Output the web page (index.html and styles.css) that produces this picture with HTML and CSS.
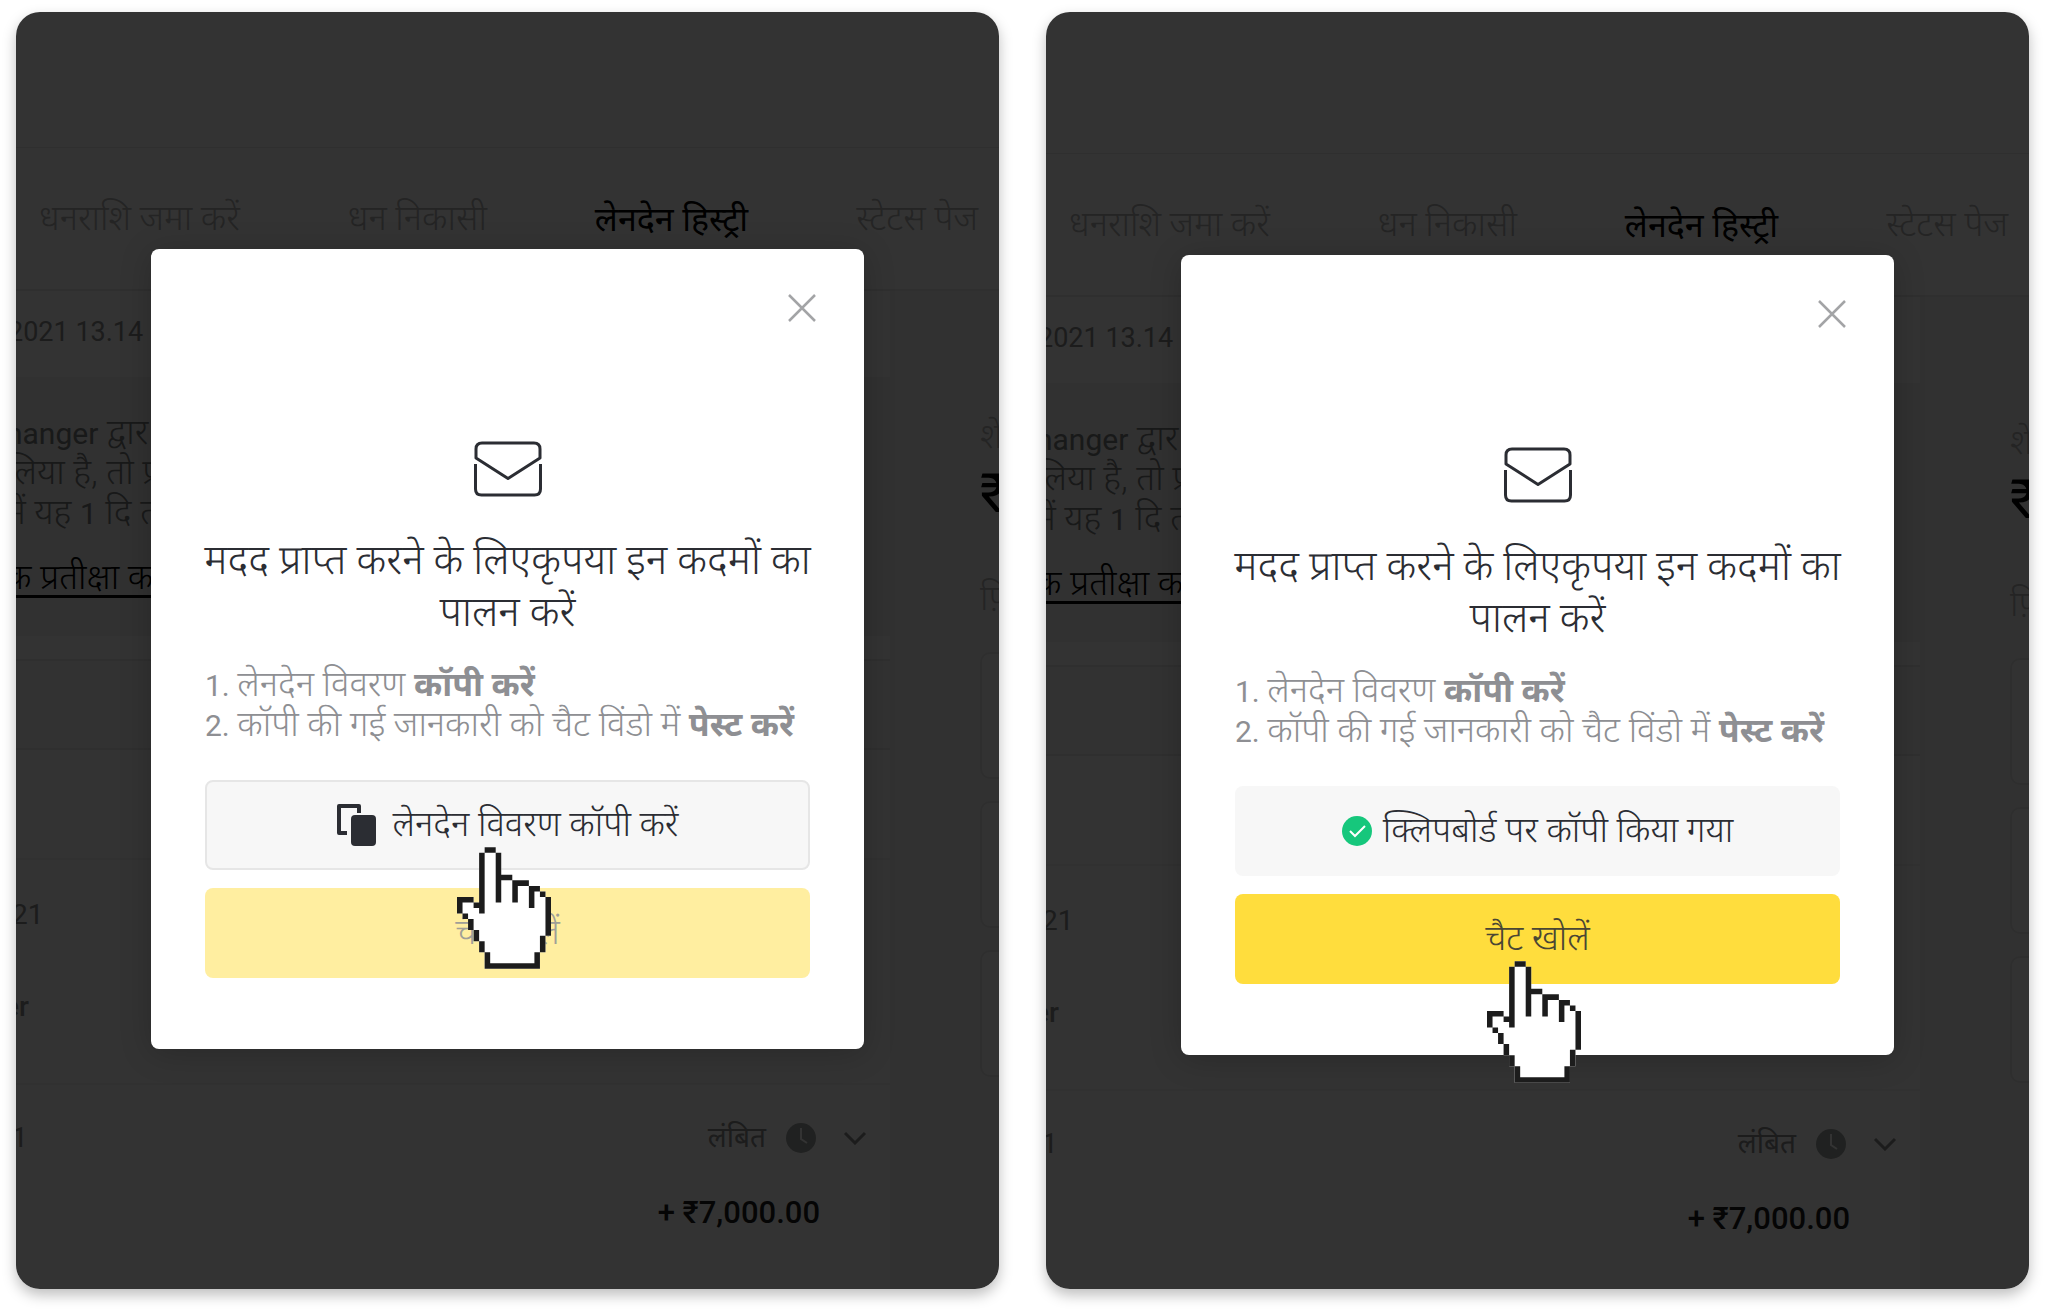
FILE: index.html
```
<!DOCTYPE html>
<html lang="hi">
<head>
  <meta charset="UTF-8">
  <title>लेनदेन हिस्ट्री</title>
  <meta name="viewport" content="width=device-width, initial-scale=1.0">
  <link rel="stylesheet" href="styles.css">
</head>
<body>
  <!-- Shared shapes -->
  <svg class="sprite" aria-hidden="true">
    <symbol id="hand" viewBox="0 0 17 22">
      <path fill="#fff" d="M5 0h2v1h1v4h2v1h3v1h2v1h1v1h1v7h-1v3h-1v3H5v-3H4v-2H3v-2H2v-2H1v-1H0V9h3v1h1V1h1z"/>
      <path fill="#1c1c1c" d="M5 0h2v1H5zM4 1h1v11H4zM7 1h1v9H7zM8 5h2v1H8zM10 6h3v1h-3zM10 7h1v3h-1zM13 7h2v1h-2zM13 8h1v3h-1zM15 8h1v1h-1zM16 9h1v7h-1zM15 16h1v3h-1zM14 19h1v3h-1zM5 21h9v1H5zM5 19h1v2H5zM4 17h1v2H4zM3 15h1v2H3zM2 13h1v2H2zM1 12h1v1H1zM0 9h1v3H0zM1 9h2v1H1zM3 10h1v1H3z"/>
    </symbol>
    <symbol id="envelope" viewBox="0 0 68 56">
      <g fill="none" stroke="#2b2d33" stroke-width="3">
        <path d="M2 17V8q0-6 6-6h52q6 0 6 6v9L34 37.500z" stroke-linejoin="round"/>
        <path d="M1.500 23v25q0 6 6 6h53q6 0 6-6V23"/>
      </g>
    </symbol>
    <symbol id="close" viewBox="0 0 28 28">
      <path d="M1 1l26 26M27 1L1 27" fill="none" stroke="#a3a4a6" stroke-width="2.500"/>
    </symbol>
    <symbol id="clock" viewBox="0 0 30 30">
      <circle cx="15" cy="15" r="15" fill="#a0a5a3"/>
      <path d="M15 5v11l6 4" fill="none" stroke="#fff" stroke-width="2"/>
    </symbol>
    <symbol id="chevron" viewBox="0 0 24 14">
      <path d="M2 2l10 10L22 2" fill="none" stroke="#8a8c8c" stroke-width="3"/>
    </symbol>
  </svg>

  <main class="steps">
    <section class="screen">
      <div class="page">
        <header class="topbar"></header>
        <nav class="tabs">
          <a href="#">धनराशि जमा करें</a>
          <a href="#">धन निकासी</a>
          <a href="#" class="active">लेनदेन हिस्ट्री</a>
          <a href="#">स्टेटस पेज</a>
        </nav>
        <div class="content">
          <div class="history">
            <div class="date">2021 13.14</div>
            <div class="notice">
              <p><span class="latin">hanger</span> द्वार<br>लिया है, तो प्र<br>में यह <span class="latin">1</span> दि त</p>
              <a href="#">क प्रतीक्षा क</a>
            </div>
            <div class="filter"></div>
            <div class="row blank"></div>
            <div class="row entry">
              <span>21</span>
              <b>er</b>
            </div>
            <div class="row last">
              <span>1</span>
              <div class="status">
                <span>लंबित</span>
                <svg class="clock"><use href="#clock"/></svg>
                <svg class="chevron"><use href="#chevron"/></svg>
              </div>
              <strong class="amount">+ ₹7,000.00</strong>
            </div>
          </div>
          <aside class="balance">
            <span>शे</span>
            <strong>₹</strong>
            <span>फ़ि</span>
            <div class="tiles">
              <div class="tile"></div>
              <div class="tile"></div>
              <div class="tile"></div>
            </div>
          </aside>
        </div>
      </div>
      <div class="overlay">
        <div class="modal" role="dialog" aria-labelledby="title-copy">
          <button class="close" type="button" aria-label="बंद करें"><svg><use href="#close"/></svg></button>
          <svg class="envelope"><use href="#envelope"/></svg>
          <h2 id="title-copy">मदद प्राप्त करने के लिएकृपया इन कदमों का पालन करें</h2>
          <ol>
            <li>लेनदेन विवरण <b>कॉपी करें</b></li>
            <li>कॉपी की गई जानकारी को चैट विंडो में <b>पेस्ट करें</b></li>
          </ol>
          <div class="action pointed">
            <button class="btn copy" type="button">
              <svg class="copy-icon" viewBox="0 0 39 42">
                <path d="M22 9V2H2v27h8" fill="none" stroke="#2b2d33" stroke-width="4" stroke-linejoin="round"/>
                <rect x="14" y="11" width="25" height="31" rx="4" fill="#2b2d33"/>
              </svg>
              लेनदेन विवरण कॉपी करें
            </button>
            <svg class="hand"><use href="#hand"/></svg>
          </div>
          <div class="action">
            <button class="btn chat" type="button" disabled>चैट खोलें</button>
          </div>
        </div>
      </div>
    </section>

    <section class="screen second">
      <div class="page">
        <header class="topbar"></header>
        <nav class="tabs">
          <a href="#">धनराशि जमा करें</a>
          <a href="#">धन निकासी</a>
          <a href="#" class="active">लेनदेन हिस्ट्री</a>
          <a href="#">स्टेटस पेज</a>
        </nav>
        <div class="content">
          <div class="history">
            <div class="date">2021 13.14</div>
            <div class="notice">
              <p><span class="latin">hanger</span> द्वार<br>लिया है, तो प्र<br>में यह <span class="latin">1</span> दि त</p>
              <a href="#">क प्रतीक्षा क</a>
            </div>
            <div class="filter"></div>
            <div class="row blank"></div>
            <div class="row entry">
              <span>21</span>
              <b>er</b>
            </div>
            <div class="row last">
              <span>1</span>
              <div class="status">
                <span>लंबित</span>
                <svg class="clock"><use href="#clock"/></svg>
                <svg class="chevron"><use href="#chevron"/></svg>
              </div>
              <strong class="amount">+ ₹7,000.00</strong>
            </div>
          </div>
          <aside class="balance">
            <span>शे</span>
            <strong>₹</strong>
            <span>फ़ि</span>
            <div class="tiles">
              <div class="tile"></div>
              <div class="tile"></div>
              <div class="tile"></div>
            </div>
          </aside>
        </div>
      </div>
      <div class="overlay">
        <div class="modal" role="dialog" aria-labelledby="title-chat">
          <button class="close" type="button" aria-label="बंद करें"><svg><use href="#close"/></svg></button>
          <svg class="envelope"><use href="#envelope"/></svg>
          <h2 id="title-chat">मदद प्राप्त करने के लिएकृपया इन कदमों का पालन करें</h2>
          <ol>
            <li>लेनदेन विवरण <b>कॉपी करें</b></li>
            <li>कॉपी की गई जानकारी को चैट विंडो में <b>पेस्ट करें</b></li>
          </ol>
          <div class="action">
            <button class="btn copied" type="button">
              <svg class="check-icon" viewBox="0 0 30 30">
                <circle cx="15" cy="15" r="15" fill="#16c77c"/>
                <path d="M8 15l5 5 10-10" fill="none" stroke="#fff" stroke-width="2"/>
              </svg>
              क्लिपबोर्ड पर कॉपी किया गया
            </button>
          </div>
          <div class="action pointed">
            <button class="btn chat" type="button">चैट खोलें</button>
            <svg class="hand"><use href="#hand"/></svg>
          </div>
        </div>
      </div>
    </section>
  </main>
</body>
</html>
```
FILE: styles.css
```
* {
  box-sizing: border-box;
}
body {
  margin: 0;
  background: #fff;
  font-family: Roboto, "Noto Sans Devanagari", "Noto Sans", sans-serif;
  font-size: 35px;
  font-weight: 300;
  line-height: 40px;
  color: #2b2d33;
}
h2, p, ol {
  margin: 0;
  padding: 0;
}
a {
  color: inherit;
  text-decoration: none;
}
button {
  font: inherit;
  color: inherit;
  border: none;
  padding: 0;
  cursor: pointer;
}
.sprite {
  display: none;
}
.steps {
  display: flex;
  gap: 47px;
  min-height: 100vh;
  padding: 12px 19px 23px 16px;
}
.screen {
  position: relative;
  flex: 1;
  min-width: 0;
  overflow: hidden;
  border-radius: 24px;
  box-shadow: 0 6px 14px rgba(0,0,0,0.26);
}

/* Page behind the dialog */
.page {
  display: flex;
  flex-direction: column;
  height: 100%;
  background: #fff;
}
.topbar {
  height: 136px;
  border-bottom: 1px solid #ebebeb;
}
.second .topbar {
  height: 142px;
}
.tabs {
  display: flex;
  align-items: center;
  gap: 108px;
  height: 143px;
  padding-left: 23px;
  border-bottom: 2px solid #ebebeb;
  white-space: nowrap;
  color: #b4b4b4;
}
.tabs .active {
  color: #000;
  font-weight: 400;
  font-size: 34px;
}
.content {
  display: flex;
  flex: 1;
}
.history {
  flex: 1;
  border-right: 17px solid #f2f2f2;
  color: #8a8c8c;
  white-space: nowrap;
}
.date {
  height: 86px;
  padding-top: 21px;
  margin-left: -8px;
  font-size: 27px;
  font-weight: 400;
}
.latin {
  font-size: 30px;
  font-weight: 400;
  line-height: 1;
}
.notice {
  height: 259px;
  padding-top: 36px;
  background: #f4f4f4;
}
.notice p {
  margin-left: -10px;
  color: #7a7c7c;
}
.notice a {
  display: inline-block;
  margin-top: 27px;
  margin-left: -10px;
  border-bottom: 3px solid #000;
  line-height: 35px;
  color: #000;
}
.filter {
  height: 91px;
  margin-top: 23px;
  border-top: 2px solid #eaeaea;
  border-bottom: 2px solid #eaeaea;
  background: #f8f8f8;
}
.row {
  font-size: 28px;
  font-weight: 400;
  border-bottom: 2px solid #f2f2f2;
}
.blank {
  height: 110px;
}
.entry {
  display: flex;
  flex-direction: column;
  gap: 52px;
  height: 225px;
  padding-top: 35px;
  margin-left: -4px;
}
.entry b {
  margin-left: -8px;
  font-weight: 500;
}
.last {
  display: grid;
  grid-template-columns: 1fr auto;
  row-gap: 35px;
  padding: 33px 23px 0 0;
  margin-left: -4px;
  border: none;
}
.status {
  display: flex;
  align-items: center;
  justify-content: flex-end;
}
.clock {
  width: 30px;
  height: 30px;
  margin: 0 27px 0 20px;
}
.chevron {
  width: 24px;
  height: 14px;
}
.amount {
  grid-column: 2;
  padding-right: 47px;
  font-size: 31px;
  font-weight: 500;
  text-align: right;
  color: #1c1c1c;
}
.balance {
  width: 92px;
  padding: 126px 0 0 73px;
  overflow: hidden;
  background: #f6f6f6;
  color: #b4b4b4;
}
.balance span, .balance strong {
  display: block;
}
.balance strong {
  margin: 7px 0 55px;
  font-size: 54px;
  line-height: 60px;
  color: #000;
}
.tiles {
  display: grid;
  gap: 22px;
  margin-top: 33px;
}
.tile {
  width: 200px;
  height: 127px;
  border: 2px solid #e6e6e6;
  border-radius: 10px;
  background: #fbfbfb;
}

/* Dialog */
.overlay {
  position: absolute;
  inset: 0;
  display: flex;
  justify-content: center;
  align-items: flex-start;
  padding-top: 237px;
  background: rgba(0,0,0,0.8);
}
.second .overlay {
  padding-top: 243px;
}
.modal {
  display: flex;
  flex-direction: column;
  width: 100%;
  max-width: 713px;
  padding: 39px 54px 71px;
  border-radius: 8px;
  background: #fff;
  box-shadow: 0 4px 32px rgba(0,0,0,0.2);
}
.close {
  align-self: flex-end;
  width: 40px;
  height: 40px;
  margin-right: -12px;
  background: none;
}
.close svg {
  display: block;
  width: 28px;
  height: 28px;
  margin: auto;
}
.envelope {
  align-self: center;
  width: 68px;
  height: 56px;
  margin-top: 113px;
}
.modal h2 {
  margin: 37px -12px 0;
  font-size: 41px;
  line-height: 52px;
  font-weight: 300;
  text-align: center;
}
.modal ol {
  height: 80px;
  margin: 27px 0 35px;
  list-style-position: inside;
  line-height: 39px;
  color: #8e8f93;
  white-space: nowrap;
}
.modal li::marker {
  font-size: 30px;
  font-weight: 400;
}
.modal b {
  font-size: 34px;
  font-weight: 700;
  line-height: 1;
}
.action {
  position: relative;
}
.action + .action {
  margin-top: 18px;
}
.pointed {
  z-index: 1;
}
.btn {
  display: flex;
  align-items: center;
  justify-content: center;
  width: 100%;
  height: 90px;
  border-radius: 8px;
  background: #f7f7f7;
}
.copy {
  gap: 17px;
  border: 2px solid #e6e6e6;
}
.copied {
  gap: 11px;
}
.chat {
  background: #ffdd3d;
  color: #4a4634;
}
.chat:disabled {
  background: #ffeea0;
  color: #a09f97;
}
.copy-icon {
  width: 39px;
  height: 42px;
}
.check-icon {
  width: 30px;
  height: 30px;
}
.hand {
  position: absolute;
  top: 67px;
  left: calc(50% - 51px);
  width: 94px;
  height: 122px;
  pointer-events: none;
}
```
